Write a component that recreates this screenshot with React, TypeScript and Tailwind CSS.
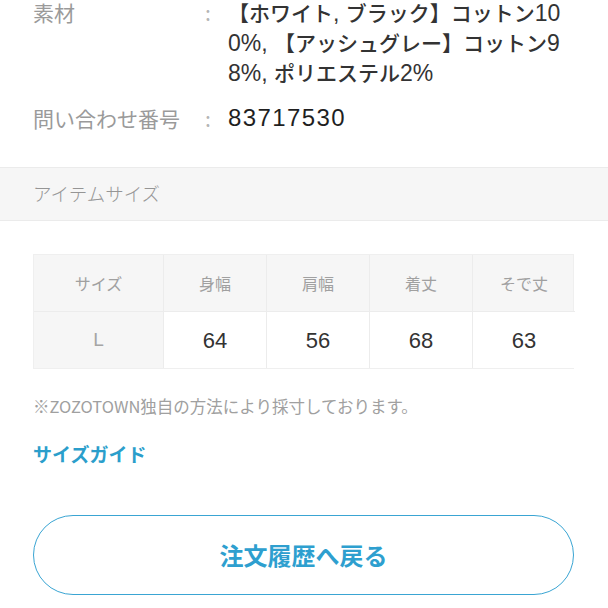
import React from "react";

const font = { fontFamily: '"Noto Sans CJK JP", "Noto Sans", sans-serif' };
const latin = { fontFamily: '"Liberation Sans", "Noto Sans CJK JP", sans-serif' };

const heads = ["身幅", "肩幅", "着丈", "そで丈"];
const values = ["64", "56", "68", "63"];

function L({ children }: { children: React.ReactNode }) {
  return (
    <span className="text-[23px] leading-[18px]" style={latin}>
      {children}
    </span>
  );
}

export default function App() {
  return (
    <div className="w-[608px] h-[608px] overflow-hidden bg-white" style={font}>
      <div className="pl-[33px] pr-[34px] -mt-[3px]">
        <div className="flex text-[21px] leading-[30px]">
          <div className="w-[172px] shrink-0 text-[#9a9a9a]">素材</div>
          <div className="w-[23px] shrink-0 text-[#b5b5b5]">:</div>
          <div className="text-[#333] font-medium whitespace-nowrap">
            <div className="h-[30px]">
              【ホワイト<L>, </L>ブラック】コットン<L>10</L>
            </div>
            <div className="h-[30px]">
              <L>0%, </L>【アッシュグレー】コットン<L>9</L>
            </div>
            <div className="h-[30px]">
              <L>8%, </L>ポリエステル<L>2%</L>
            </div>
          </div>
        </div>
        <div className="flex text-[21px] leading-[30px] mt-[16px]">
          <div className="w-[172px] shrink-0 text-[#9a9a9a]">問い合わせ番号</div>
          <div className="w-[23px] shrink-0 text-[#b5b5b5]">:</div>
          <div className="text-[#1f1f1f] text-[24px] tracking-[1.4px]" style={latin}>
            83717530
          </div>
        </div>
      </div>

      <div className="mt-[34px] h-[54px] bg-[#f6f6f6] border-y border-[#ebebeb] flex items-center pl-[33px] text-[18.5px] font-light text-[#959595]">
        アイテムサイズ
      </div>

      <div className="pl-[33px] pr-[34px] mt-[33px]">
        <div className="grid grid-cols-[130px_103px_103px_103px_102px] border border-[#efefef] bg-[#f6f6f6]">
          <div className="h-[57px] flex items-center justify-center text-[16px] text-[#a0a0a0] border-r border-b border-[#ececec]">
            サイズ
          </div>
          {heads.map((h, i) => (
            <div
              key={h}
              className={
                "h-[57px] flex items-center justify-center text-[16px] text-[#a0a0a0] border-b border-[#ececec] " +
                (i < 3 ? "border-r" : "")
              }
            >
              {h}
            </div>
          ))}
          <div
            className="h-[56px] flex items-center justify-center text-[19px] text-[#a5a5a5] border-r border-[#ececec]"
            style={latin}
          >
            L
          </div>
          {values.map((v, i) => (
            <div
              key={i}
              className={
                "h-[56px] flex items-center justify-center bg-white text-[22px] text-[#333] border-[#ececec] " +
                (i < 3 ? "border-r" : "")
              }
              style={latin}
            >
              {v}
            </div>
          ))}
        </div>

        <div className="mt-[25px] text-[16.5px] leading-[24px] text-[#a0a0a0]">
          ※ZOZOTOWN独自の方法により採寸しております。
        </div>
        <div className="mt-[23px] text-[19px] leading-[26px] font-bold text-[#2b9ecb]">
          サイズガイド
        </div>

        <button className="mt-[48px] w-full h-[80px] rounded-full border-[1.5px] border-[#3aa5d3] flex items-center justify-center text-[24px] font-bold text-[#2e9fcf] bg-white">
          注文履歴へ戻る
        </button>
      </div>
    </div>
  );
}
